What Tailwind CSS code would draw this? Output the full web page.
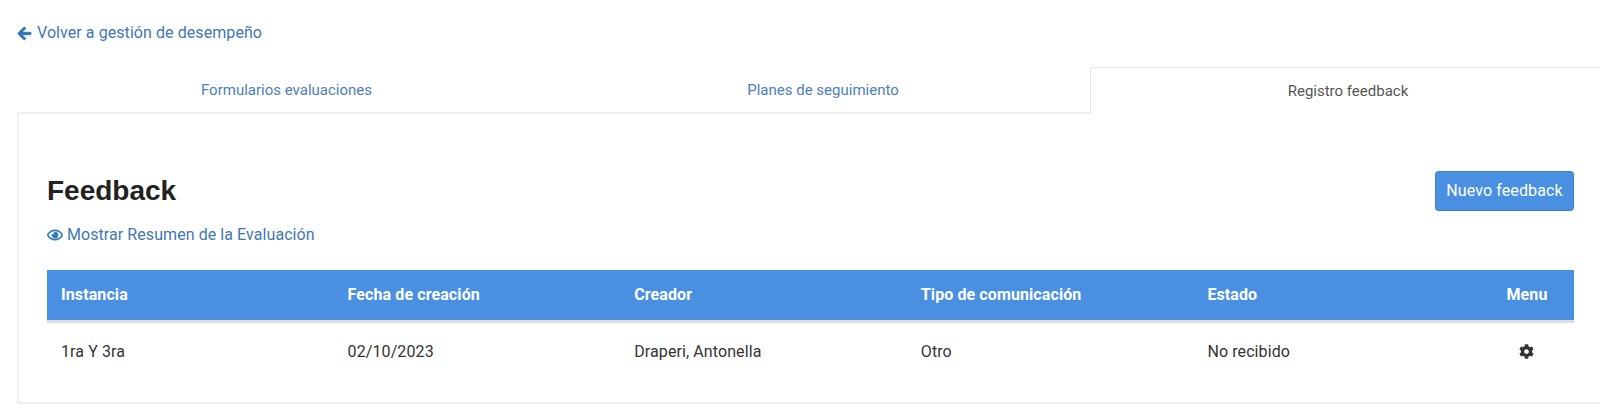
<!DOCTYPE html>
<html><head><meta charset="utf-8"><script src="https://cdn.jsdelivr.net/npm/@tailwindcss/browser@4"></script></head>
<body class="bg-white font-['Roboto',sans-serif] overflow-hidden">
<div class="w-[1600px] h-[420px] pl-[17px] overflow-hidden">
  <a class="flex items-center h-[20px] mt-[23px] text-[16px] leading-[20px] tracking-[0.07px] text-[#4277b3] gap-[5px]">
    <svg class="w-[15px] h-[15px]" viewBox="0 0 448 512" fill="#2f74b5" stroke="#2f74b5" stroke-width="30"><path d="M257.5 445.1l-22.2 22.2c-9.4 9.4-24.6 9.4-33.9 0L7 273c-9.4-9.4-9.4-24.6 0-33.9L201.4 44.7c9.4-9.4 24.6-9.4 33.9 0l22.2 22.2c9.5 9.5 9.3 25-.4 34.3L136.6 216H424c13.3 0 24 10.7 24 24v32c0 13.3-10.7 24-24 24H136.6l120.5 114.8c9.8 9.3 10 24.8.4 34.3z"/></svg>
    <span>Volver a gestión de desempeño</span>
  </a>
  <div class="flex mt-[24px] w-[1603px] h-[47px] text-[15px] leading-[20px]">
    <div class="shrink-0 w-[539px] h-[47px] pt-[13px] text-center text-[#4d7fb8] border-b-2 border-[#eeeeee]">Formularios evaluaciones</div>
    <div class="shrink-0 w-[534px] h-[47px] pt-[13px] text-center text-[#4d7fb8] border-b-2 border-[#eeeeee]">Planes de seguimiento</div>
    <div class="shrink-0 w-[530px] h-[47px] pt-[13px] pr-[14px] text-center text-[#555555] border border-b-0 border-[#e4e4e4] rounded-t-[4px]">Registro feedback</div>
  </div>
  <div class="w-[1600px] h-[290px] border-l-2 border-b-2 border-[#eeeeee] pl-[28px] pr-[41px] pt-[57px]">
    <div class="w-[1527px]">
      <div class="flex justify-between items-start">
        <h1 class="font-['Liberation_Sans',sans-serif] font-bold text-[28px] leading-[40px] text-[#222222]">Feedback</h1>
        <button class="w-[139px] h-[40px] bg-[#4a90e2] border border-[#337ab7]/60 rounded-[4px] text-white text-[16px] tracking-[0.1px]">Nuevo feedback</button>
      </div>
      <a class="flex items-center h-[24px] mt-[12px] text-[16px] tracking-[0.07px] text-[#4277b3] gap-[4px]">
        <svg class="w-[16px] h-[16px]" viewBox="0 0 576 512" fill="#337ab7" stroke="#337ab7" stroke-width="16"><path d="M288 144a110.9 110.9 0 0 0-31.2 5 55.4 55.4 0 0 1 7.2 27 56 56 0 0 1-56 56 55.4 55.4 0 0 1-27-7.2A111.7 111.7 0 1 0 288 144zm284.5 97.4C518.3 135.6 410.9 64 288 64S57.7 135.6 3.5 241.4a32.4 32.4 0 0 0 0 29.2C57.7 376.4 165.1 448 288 448s230.3-71.6 284.5-177.4a32.4 32.4 0 0 0 0-29.2zM288 400c-98.7 0-189.1-55-237.9-144C98.9 167 189.3 112 288 112s189.1 55 237.9 144C477.1 345 386.7 400 288 400z"/></svg>
        <span>Mostrar Resumen de la Evaluación</span>
      </a>
      <div class="mt-[23px] w-[1527px] text-[16px] tracking-[0.1px]">
        <div class="grid grid-cols-[286.6px_286.6px_286.6px_286.6px_286.6px_94px] h-[53px] items-center bg-[#4a90e2] border-b-[3px] border-[#dddddd] text-white font-bold">
          <div class="pl-[14px]">Instancia</div>
          <div class="pl-[14px]">Fecha de creación</div>
          <div class="pl-[14px]">Creador</div>
          <div class="pl-[14px]">Tipo de comunicación</div>
          <div class="pl-[14px]">Estado</div>
          <div class="text-center">Menu</div>
        </div>
        <div class="grid grid-cols-[286.6px_286.6px_286.6px_286.6px_286.6px_94px] h-[58px] items-center text-[#333333]">
          <div class="pl-[14px]">1ra Y 3ra</div>
          <div class="pl-[14px]">02/10/2023</div>
          <div class="pl-[14px]">Draperi, Antonella</div>
          <div class="pl-[14px]">Otro</div>
          <div class="pl-[14px]">No recibido</div>
          <div class="flex justify-center pb-[1px]">
            <svg class="w-[15px] h-[15px]" viewBox="0 0 512 512" fill="#333333"><path d="M487.4 315.7l-42.6-24.6c4.3-23.2 4.3-47 0-70.2l42.6-24.6c4.9-2.8 7.1-8.6 5.5-14-11.1-35.6-30-67.8-54.7-94.6-3.8-4.1-10-5.1-14.8-2.3L380.8 110c-17.9-15.4-38.5-27.3-60.8-35.1V25.8c0-5.6-3.9-10.5-9.4-11.7-36.7-8.2-74.3-7.8-109.2 0-5.5 1.2-9.4 6.1-9.4 11.7V75c-22.2 7.9-42.8 19.8-60.8 35.1L88.7 85.5c-4.9-2.8-11-1.9-14.8 2.3-24.7 26.7-43.6 58.9-54.7 94.6-1.7 5.4.6 11.2 5.5 14L67.3 221c-4.3 23.2-4.3 47 0 70.2l-42.6 24.6c-4.9 2.8-7.1 8.6-5.5 14 11.1 35.6 30 67.8 54.7 94.6 3.8 4.1 10 5.1 14.8 2.3l42.6-24.6c17.9 15.4 38.5 27.3 60.8 35.1v49.2c0 5.6 3.9 10.5 9.4 11.7 36.7 8.2 74.3 7.8 109.2 0 5.5-1.2 9.4-6.1 9.4-11.7v-49.2c22.2-7.9 42.8-19.8 60.8-35.1l42.6 24.6c4.9 2.8 11 1.9 14.8-2.3 24.7-26.7 43.6-58.9 54.7-94.6 1.5-5.5-.7-11.3-5.6-14.1zM256 336c-44.1 0-80-35.9-80-80s35.9-80 80-80 80 35.9 80 80-35.9 80-80 80z"/></svg>
          </div>
        </div>
      </div>
    </div>
  </div>
</div>
</body></html>
